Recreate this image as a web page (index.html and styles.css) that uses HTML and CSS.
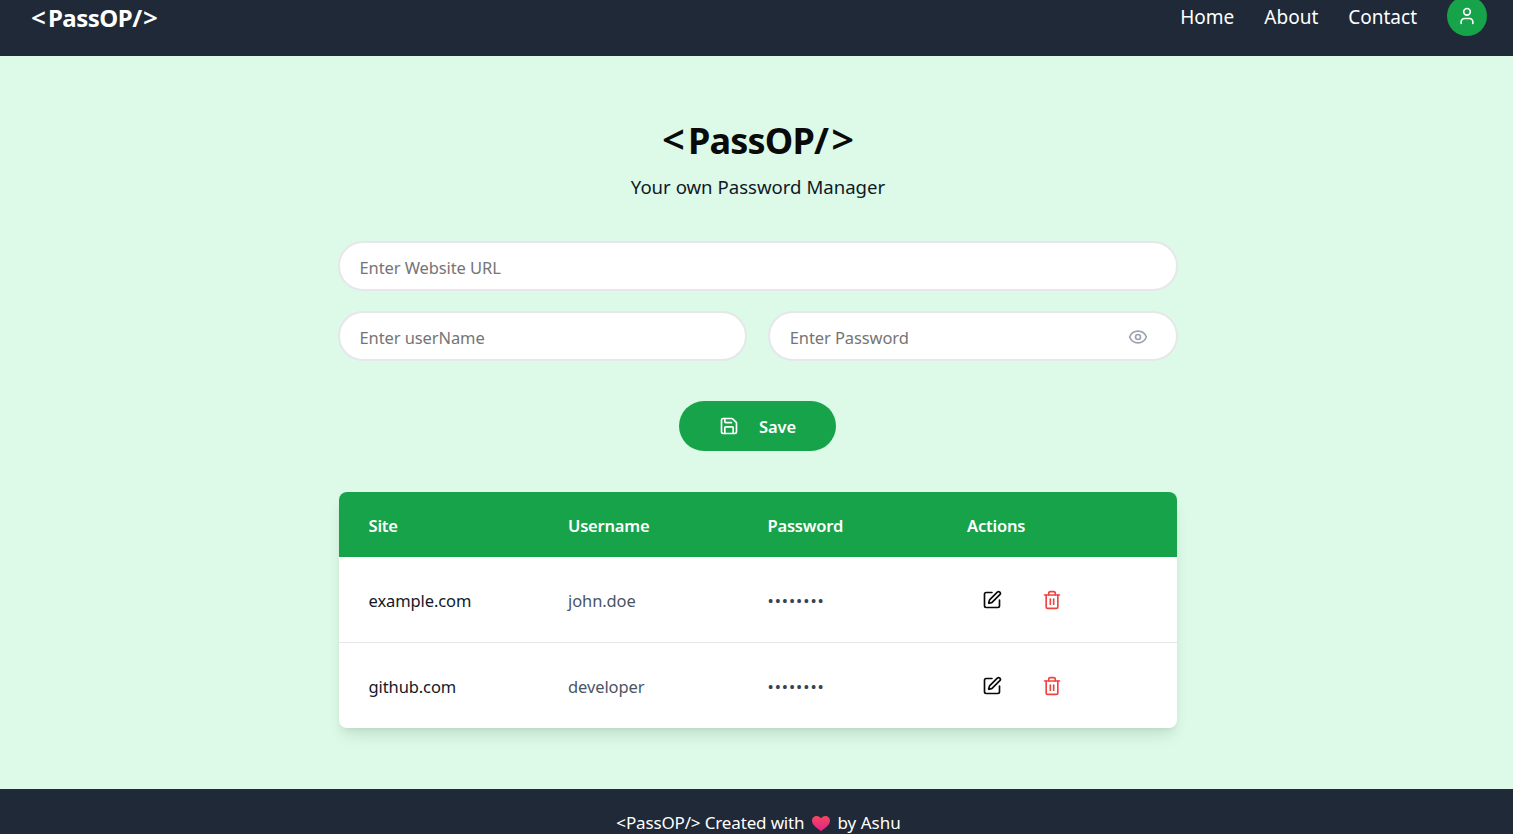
FILE: index.html
```html
<!DOCTYPE html>
<html lang="en">

<head>
    <meta charset="UTF-8">
    <meta name="viewport" content="width=device-width, initial-scale=1.0">
    <title>PassOP</title>
    <link rel="stylesheet" href="styles.css">
</head>

<body>
    <nav class="navbar">
        <div class="logo"><span class="bracket">&lt;</span>PassOP/<span class="bracket">&gt;</span></div>
        <ul class="nav-links">
            <li><a href="#">Home</a></li>
            <li><a href="#">About</a></li>
            <li><a href="#">Contact</a></li>
            <li>
                <button class="avatar" aria-label="Profile">
                    <svg class="icon" viewBox="0 0 24 24"><path d="M19 21v-2a4 4 0 0 0-4-4H9a4 4 0 0 0-4 4v2"/><circle cx="12" cy="7" r="4"/></svg>
                </button>
            </li>
        </ul>
    </nav>

    <main class="content">
        <h1 class="title"><span class="bracket">&lt;</span>PassOP/<span class="bracket">&gt;</span></h1>
        <p class="subtitle">Your own Password Manager</p>

        <div class="form">
            <input class="field" type="text" placeholder="Enter Website URL">
            <div class="form-row">
                <input class="field" type="text" placeholder="Enter userName">
                <div class="password-box">
                    <input class="field" type="password" placeholder="Enter Password">
                    <svg class="icon eye" viewBox="0 0 24 24"><path d="M2.062 12.348a1 1 0 0 1 0-.696 10.75 10.75 0 0 1 19.876 0 1 1 0 0 1 0 .696 10.75 10.75 0 0 1-19.876 0"/><circle cx="12" cy="12" r="3"/></svg>
                </div>
            </div>
            <button class="save-btn">
                <svg class="icon" viewBox="0 0 24 24"><path d="M15.2 3a2 2 0 0 1 1.4.6l3.8 3.8a2 2 0 0 1 .6 1.4V19a2 2 0 0 1-2 2H5a2 2 0 0 1-2-2V5a2 2 0 0 1 2-2z"/><path d="M17 21v-7a1 1 0 0 0-1-1H8a1 1 0 0 0-1 1v7"/><path d="M7 3v4a1 1 0 0 0 1 1h7"/></svg>
                Save
            </button>
        </div>

        <div class="table-card">
            <table>
                <thead>
                    <tr>
                        <th>Site</th>
                        <th>Username</th>
                        <th>Password</th>
                        <th>Actions</th>
                    </tr>
                </thead>
                <tbody>
                    <tr>
                        <td class="site">example.com</td>
                        <td class="user">john.doe</td>
                        <td class="dots">••••••••</td>
                        <td>
                            <div class="actions">
                                <svg class="icon edit" viewBox="0 0 24 24"><path d="M12 3H5a2 2 0 0 0-2 2v14a2 2 0 0 0 2 2h14a2 2 0 0 0 2-2v-7"/><path d="M18.375 2.625a1 1 0 0 1 3 3l-9.013 9.014a2 2 0 0 1-.853.505l-2.873.84a.5.5 0 0 1-.62-.62l.84-2.873a2 2 0 0 1 .506-.852z"/></svg>
                                <svg class="icon trash" viewBox="0 0 24 24"><path d="M3 6h18"/><path d="M19 6v14c0 1-1 2-2 2H7c-1 0-2-1-2-2V6"/><path d="M8 6V4c0-1 1-2 2-2h4c1 0 2 1 2 2v2"/><line x1="10" x2="10" y1="11" y2="17"/><line x1="14" x2="14" y1="11" y2="17"/></svg>
                            </div>
                        </td>
                    </tr>
                    <tr>
                        <td class="site">github.com</td>
                        <td class="user">developer</td>
                        <td class="dots">••••••••</td>
                        <td>
                            <div class="actions">
                                <svg class="icon edit" viewBox="0 0 24 24"><path d="M12 3H5a2 2 0 0 0-2 2v14a2 2 0 0 0 2 2h14a2 2 0 0 0 2-2v-7"/><path d="M18.375 2.625a1 1 0 0 1 3 3l-9.013 9.014a2 2 0 0 1-.853.505l-2.873.84a.5.5 0 0 1-.62-.62l.84-2.873a2 2 0 0 1 .506-.852z"/></svg>
                                <svg class="icon trash" viewBox="0 0 24 24"><path d="M3 6h18"/><path d="M19 6v14c0 1-1 2-2 2H7c-1 0-2-1-2-2V6"/><path d="M8 6V4c0-1 1-2 2-2h4c1 0 2 1 2 2v2"/><line x1="10" x2="10" y1="11" y2="17"/><line x1="14" x2="14" y1="11" y2="17"/></svg>
                            </div>
                        </td>
                    </tr>
                </tbody>
            </table>
        </div>
    </main>

    <footer class="footer">
        <span class="footer-text">&lt;PassOP/&gt; Created with</span>
        <svg class="heart" viewBox="2 2 20 20">
            <defs>
                <linearGradient id="heartFill" x1="0" y1="0" x2="0" y2="1">
                    <stop offset="0" stop-color="#f6485f"/>
                    <stop offset="1" stop-color="#e0218a"/>
                </linearGradient>
            </defs>
            <path fill="url(#heartFill)" d="M12 20C6.500 16 2 12.800 2 8.200 2 5.200 4.400 3 7.300 3c1.900 0 3.700 1 4.700 2.700C13 4 14.800 3 16.700 3 19.600 3 22 5.200 22 8.200c0 4.600-4.500 7.800-10 11.800z"/>
        </svg>
        <span>by Ashu</span>
    </footer>
</body>

</html>
```

FILE: styles.css
```css
* {
    margin: 0;
    padding: 0;
    box-sizing: border-box;
    list-style: none;
    text-decoration: none;
}

html,
body {
    height: 834px;
    overflow: hidden;
}

body {
    display: flex;
    flex-direction: column;
    font-family: "Noto Sans", "Open Sans", sans-serif;
    background-color: #dcfae7;
}

.icon {
    width: 20px;
    height: 20px;
    fill: none;
    stroke: currentColor;
    stroke-width: 2;
    stroke-linecap: round;
    stroke-linejoin: round;
}

.navbar {
    height: 56px;
    flex: none;
    display: flex;
    justify-content: space-between;
    align-items: flex-start;
    padding: 0 26px 0 31px;
    background-color: #1f2937;
    color: white;
}

.logo {
    font-size: 24px;
    font-weight: 700;
    line-height: 36px;
    letter-spacing: -0.5px;
}

.logo .bracket {
    font-size: 26px;
    font-weight: 600;
    line-height: 20px;
    letter-spacing: 0;
}

.logo .bracket:first-child {
    margin-right: 2px;
}

.logo .bracket:last-child {
    margin-left: 1.5px;
}

.nav-links {
    display: flex;
    gap: 30px;
    font-size: 19px;
    line-height: 34px;
}

.nav-links a {
    color: white;
}

.avatar {
    width: 40px;
    height: 40px;
    margin-top: -4px;
    display: flex;
    justify-content: center;
    align-items: center;
    border: none;
    border-radius: 50%;
    background-color: #16a34a;
    color: white;
}

.content {
    flex: 1;
    display: flex;
    flex-direction: column;
    align-items: center;
    padding: 60px 336px 0 339px;
}

.title {
    font-size: 36px;
    font-weight: 700;
    line-height: 50px;
    letter-spacing: -0.8px;
    color: #0a0a0a;
}

.title .bracket {
    font-size: 40px;
    font-weight: 600;
    line-height: 30px;
    letter-spacing: 0;
}

.title .bracket:first-child {
    margin-right: 3px;
}

.title .bracket:last-child {
    margin-left: 3px;
}

.subtitle {
    margin-top: 7px;
    font-size: 18.6px;
    line-height: 28px;
    color: #111827;
}

.form {
    width: 840px;
    margin-top: 40px;
    margin-left: -1.5px;
    align-self: flex-start;
    display: flex;
    flex-direction: column;
    align-items: center;
    gap: 20px;
}

.field {
    width: 100%;
    height: 50px;
    padding: 2px 20px 0;
    border: 2px solid #e5e7eb;
    border-radius: 25px;
    outline: none;
    background-color: white;
    font-family: inherit;
    font-size: 16.5px;
    letter-spacing: -0.1px;
}

.field::placeholder {
    color: #757575;
}

.form-row {
    width: 100%;
    display: grid;
    grid-template-columns: 1fr 1fr;
    gap: 20.5px;
}

.password-box {
    position: relative;
}

.eye {
    position: absolute;
    top: 16px;
    right: 29.5px;
    color: #9ca3af;
}

.save-btn {
    width: 157px;
    height: 50px;
    margin-top: 20px;
    display: flex;
    justify-content: center;
    align-items: center;
    gap: 20px;
    border: none;
    border-radius: 25px;
    background-color: #16a34a;
    color: white;
    font-family: inherit;
    font-size: 16.5px;
    font-weight: 600;
    letter-spacing: -0.15px;
}

.table-card {
    width: 100%;
    margin-top: 41px;
    border-radius: 8px;
    overflow: hidden;
    background-color: white;
    box-shadow: 0 10px 15px -3px rgba(0, 0, 0, 0.1), 0 4px 6px -4px rgba(0, 0, 0, 0.1);
}

table {
    width: 100%;
    border-collapse: collapse;
    table-layout: fixed;
}

thead {
    background-color: #16a34a;
    color: white;
}

th {
    height: 65px;
    padding: 1px 29px 0 29.500px;
    width: 199.5px;
    text-align: left;
    font-size: 16.5px;
    font-weight: 600;
    letter-spacing: -0.2px;
}

th:last-child {
    width: auto;
}

td {
    height: 85px;
    padding: 2px 29px 0 29.500px;
    font-size: 16.5px;
    letter-spacing: -0.1px;
}

tbody tr + tr td {
    height: 86px;
    border-top: 1px solid #e5e7eb;
}

.site {
    color: #111827;
}

.user {
    color: #4b5563;
}

.dots {
    color: #374151;
    letter-spacing: 0.95px;
}

.actions {
    display: flex;
    gap: 40px;
    padding-left: 14.5px;
}

.edit {
    color: #0a0a0a;
}

.trash {
    color: #ef4444;
}

.footer {
    height: 45px;
    flex: none;
    display: flex;
    justify-content: center;
    align-items: flex-start;
    gap: 7px;
    padding: 22px 0 0 4px;
    background-color: #1f2937;
    color: white;
    font-size: 17px;
    line-height: 24px;
}

.footer-text {
    letter-spacing: -0.15px;
}

.heart {
    width: 18px;
    height: 18px;
    margin: 4px 0 0 1px;
}
```
